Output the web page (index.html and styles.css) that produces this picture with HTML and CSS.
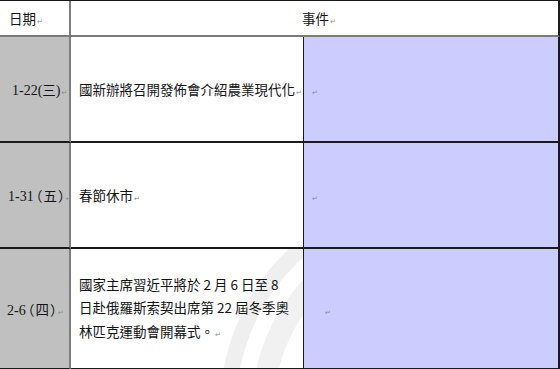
FILE: index.html
```html
<!DOCTYPE html>
<html>
<head>
<meta charset="utf-8">
<link rel="stylesheet" href="styles.css">
</head>
<body>
<div class="sheet">
  <table class="events">
    <colgroup>
      <col class="w-date">
      <col class="w-text">
      <col class="w-side">
    </colgroup>
    <tr class="head">
      <td class="c-date h-date">日期<span class="pm">↵</span></td>
      <td class="h-event" colspan="2">事件<span class="pm">↵</span></td>
    </tr>
    <tr class="r1">
      <td class="c-date"><span class="d">1-22(</span>三<span class="d">)</span><span class="pm">↵</span></td>
      <td class="c-text">國新辦將召開發佈會介紹農業現代化<span class="pm">↵</span></td>
      <td class="c-side"><span class="pm">↵</span></td>
    </tr>
    <tr class="r2">
      <td class="c-date"><span class="d">1-31</span><span class="po">（</span>五<span class="pc">）</span><span class="pm">↵</span></td>
      <td class="c-text">春節休市<span class="pm">↵</span></td>
      <td class="c-side"><span class="pm">↵</span></td>
    </tr>
    <tr class="r3">
      <td class="c-date"><span class="d">2-6</span><span class="po">（</span>四<span class="pc">）</span><span class="pm">↵</span></td>
      <td class="c-text wm">
        <svg class="swoosh" width="233" height="119" viewBox="0 0 233 119">
          <circle cx="370" cy="160" r="213" fill="none" stroke="#efefef" stroke-width="16"/>
          <circle cx="370" cy="160" r="178" fill="none" stroke="#f1f1f1" stroke-width="22"/>
        </svg>
        <span class="txt">國家主席習近平將於 2 月 6 日至 8<br>日赴俄羅斯索契出席第 22 屆冬季奧<br>林匹克運動會開幕式。<span class="pm">↵</span></span>
      </td>
      <td class="c-side indent"><span class="pm">↵</span></td>
    </tr>
  </table>
</div>
</body>
</html>
```

FILE: styles.css
```css
html, body {
  margin: 0;
  padding: 0;
  background: #ffffff;
}

.sheet {
  width: 560px;
  height: 369px;
  overflow: hidden;
}

.events {
  border-collapse: separate;
  border-spacing: 0;
  table-layout: fixed;
  width: 560px;
  font-family: "Noto Sans CJK TC", "Noto Sans", sans-serif;
  font-size: 13.5px;
  color: #141414;
  border-top: 1px solid #1a1a1a;
}

.w-date { width: 71px; }
.w-text { width: 233px; }
.w-side { width: 256px; }

.events td {
  padding: 0;
  vertical-align: middle;
  box-sizing: border-box;
}

.d {
  font-family: "Liberation Serif", serif;
  font-size: 14px;
}

.po,
.pc {
  font-feature-settings: "halt" 1;
}

.po {
  padding-left: 2px;
  padding-right: 1px;
}

.pc {
  padding-left: 1px;
}

.pm {
  font-family: "DejaVu Sans", sans-serif;
  font-size: 7px;
  color: #8a8a8a;
  margin-left: 1px;
}

.head td {
  height: 36px;
  border-bottom: 2px solid #7a7a7a;
}

.h-date {
  padding-left: 9px !important;
}

.h-event {
  text-align: left;
  padding-left: 231px !important;
  border-right: 2px solid #1a1a1a;
}

.c-date {
  background: #c0c0c0;
  border-right: 2px solid #7d7d7d;
  text-align: left;
  white-space: nowrap;
}

.r1 .c-date { padding-left: 12px !important; }
.r2 .c-date { padding-left: 8px !important; }
.r3 .c-date { padding-left: 7px !important; }

.head .c-date {
  background: #ffffff;
}

.c-text {
  background: #ffffff;
  border-right: 1px solid #1a1a1a;
  padding-left: 8px !important;
}

.c-side {
  background: #ccccff;
  border-right: 2px solid #1a1a1a;
  padding-left: 7px !important;
}

.c-side.indent {
  padding-left: 20px !important;
}

.r1 td {
  height: 106px;
  border-bottom: 2px solid #1a1a1a;
}

.r2 td {
  height: 106px;
  border-bottom: 2px solid #1a1a1a;
}

.r3 td {
  height: 121px;
  border-bottom: 2px solid #1a1a1a;
}

.wm {
  position: relative;
  overflow: hidden;
}

.swoosh {
  position: absolute;
  left: 0;
  top: 0;
}

.txt {
  position: relative;
  display: block;
  line-height: 23.5px;
  padding-top: 3px;
}
```
